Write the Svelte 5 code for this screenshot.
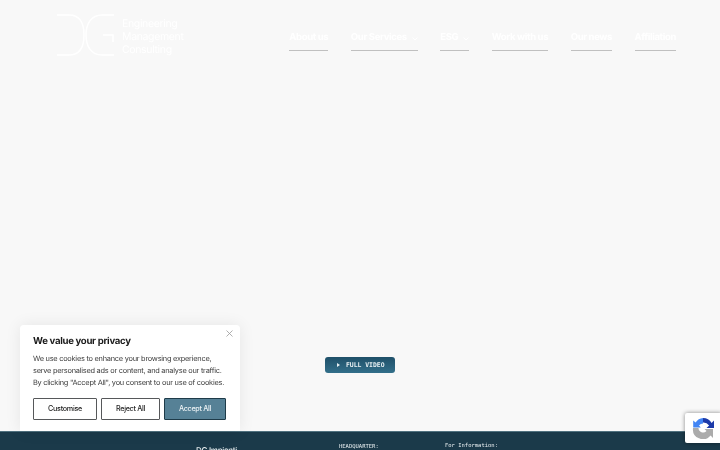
<script>
  const nav = [
    { label: "About us" },
    { label: "Our Services", caret: true },
    { label: "ESG", caret: true },
    { label: "Work with us" },
    { label: "Our news" },
    { label: "Affiliation" },
  ];
</script>

<div class="page">
  <header class="top">
    <a class="logo" href="#home" aria-label="DG Engineering Management Consulting">
      <svg width="58" height="42" viewBox="0 0 58 42" fill="none" stroke="#fff" stroke-width="1.5">
        <path d="M0 1h12c11 0 15 9 15 20s-4 20-15 20H0" />
        <path d="M57 1H45c-11 0-16 9-16 20s5 20 16 20h12" />
        <path d="M46 21h10v7" />
      </svg>
      <span class="logo-text">
        <span>Engineering</span>
        <span>Management</span>
        <span>Consulting</span>
      </span>
    </a>
    <nav class="menu">
      {#each nav as item}
        <a href="#nav">
          {item.label}
          {#if item.caret}
            <svg class="caret" width="6" height="4" viewBox="0 0 6 4" fill="none" stroke="#fff" stroke-width="1"><path d="M.5 .5 3 3 5.500 .5" /></svg>
          {/if}
        </a>
      {/each}
    </nav>
  </header>

  <main class="hero">
    <button class="video"><span class="play"></span>FULL VIDEO</button>
  </main>

  <footer class="foot">
    <div class="col-name">DG Impianti</div>
    <div class="col-hq">HEADQUARTER:</div>
    <div class="col-info">For Information:</div>
  </footer>

  <section class="cookie">
    <button class="close" aria-label="Close">
      <svg width="7" height="7" viewBox="0 0 7 7" stroke="#9a9a9a" stroke-width="0.8"><path d="M.5 .5l6 6M6.500 .5l-6 6" /></svg>
    </button>
    <h2>We value your privacy</h2>
    <p>We use cookies to enhance your browsing experience, serve personalised ads or content, and analyse our traffic. By clicking "Accept All", you consent to our use of cookies.</p>
    <div class="actions">
      <button class="custom">Customise</button>
      <button class="reject">Reject All</button>
      <button class="accept">Accept All</button>
    </div>
  </section>

  <div class="recaptcha" aria-label="reCAPTCHA">
    <svg width="22" height="22" viewBox="0 0 22 22" fill="none">
      <path d="M11 1a10 10 0 0 1 8.600 5L22 3.500V11h-7.500l2.600-2.600A7 7 0 0 0 11 5.500z" fill="#1c3aa9" />
      <path d="M11 1v5.500A5 5 0 0 0 7 8.600L8.800 10.500H1.200V3.500L3.600 5.400A10 10 0 0 1 11 1z" fill="#4285f4" />
      <path d="M1 11h5.500a4.600 4.600 0 0 0 8 3L12.500 12H21v9l-2.400-2.400A10 10 0 0 1 1 11z" fill="#ababab" />
    </svg>
  </div>
</div>

<style>
  :global(body) {
    margin: 0;
    background: #f8f8f8;
  }

  .page {
    position: relative;
    display: flex;
    flex-direction: column;
    height: 450px;
    overflow: hidden;
    font-family: Inter, "Liberation Sans", sans-serif;
    text-rendering: geometricPrecision;
    /* own layer: greyscale text instead of lcd fringes, soft like the reference */
    filter: blur(0.25px);
  }

  .top {
    display: flex;
    justify-content: space-between;
    align-items: flex-start;
    flex-shrink: 0;
    height: 47px;
    padding: 14px 44px 0 57px;
  }

  .logo {
    display: flex;
    gap: 7px;
    color: #fff;
    text-decoration: none;
  }

  .logo-text {
    display: flex;
    flex-direction: column;
    margin-top: 3px;
    font-size: 10.500px;
    letter-spacing: -0.35px;
    line-height: 13px;
    font-weight: 400;
  }

  .menu {
    display: flex;
    gap: 22.500px;
    margin-top: 15px;
  }

  .menu a {
    display: flex;
    align-items: flex-start;
    gap: 5px;
    height: 21px;
    color: #fff;
    font-size: 9.500px;
    letter-spacing: -0.35px;
    line-height: 18px;
    font-weight: 700;
    text-decoration: none;
    border-bottom: 1.5px solid #c0c0c0;
    white-space: nowrap;
  }

  .caret {
    margin-top: 8px;
  }

  .hero {
    flex: 1;
    display: flex;
    justify-content: center;
    align-items: flex-end;
    padding-bottom: 58px;
  }

  .video {
    display: flex;
    align-items: center;
    gap: 6px;
    width: 70px;
    height: 16px;
    padding: 0 0 0 12px;
    border: 0;
    border-radius: 3px;
    background: linear-gradient(#1f5069, #336f8a);
    color: #e8f0f3;
    font-family: "DejaVu Sans Mono", "Liberation Mono", monospace;
    font-size: 6.400px;
    font-weight: 700;
  }

  .play {
    width: 0;
    height: 0;
    border-left: 3px solid #e8f0f3;
    border-top: 2px solid transparent;
    border-bottom: 2px solid transparent;
  }

  .foot {
    display: flex;
    flex-shrink: 0;
    height: 19px;
    box-sizing: border-box;
    background: #1b3a4a;
    color: #e8eef0;
    border-top: 1px solid #50717f;
  }

  .col-name {
    width: 143px;
    margin: 13px 0 0 196px;
    font-size: 8px;
    letter-spacing: -0.3px;
    font-weight: 500;
  }

  .col-hq {
    width: 106px;
    margin-top: 12px;
    font-family: "DejaVu Sans Mono", "Liberation Mono", monospace;
    font-size: 5.500px;
  }

  .col-info {
    margin-top: 11px;
    font-family: "DejaVu Sans Mono", "Liberation Mono", monospace;
    font-size: 5.500px;
  }

  .cookie {
    position: absolute;
    left: 20px;
    top: 325px;
    width: 220px;
    height: 106px;
    box-sizing: border-box;
    padding: 10px 13px;
    background: #fff;
    border-radius: 4px 4px 0 0;
    box-shadow: 0 0 16px rgba(0, 0, 0, 0.08);
  }

  .close {
    position: absolute;
    top: 5px;
    right: 7px;
    display: flex;
    padding: 0;
    border: 0;
    background: none;
  }

  .cookie h2 {
    margin: 0 0 5px;
    font-size: 9.600px;
    letter-spacing: -0.3px;
    line-height: 13px;
    font-weight: 700;
    color: #1a1a1a;
  }

  .cookie p {
    margin: 0 0 9px;
    font-size: 7.400px;
    letter-spacing: -0.25px;
    line-height: 12px;
    color: #3c3c3c;
  }

  .actions {
    display: flex;
    gap: 4px;
  }

  .actions button {
    height: 21.500px;
    padding: 0;
    border: 1.5px solid #56585a;
    border-radius: 1px;
    background: #fff;
    color: #222;
    font-family: inherit;
    font-size: 7.200px;
    letter-spacing: -0.3px;
    font-weight: 500;
  }

  .actions .custom {
    width: 64px;
  }

  .actions .reject {
    width: 59px;
  }

  .actions .accept {
    width: 62px;
    background: #568196;
    border-color: #1e3b49;
    color: #eef4f6;
  }

  .recaptcha {
    position: absolute;
    right: -2px;
    top: 413px;
    display: flex;
    align-items: center;
    width: 37px;
    height: 30px;
    box-sizing: border-box;
    padding-left: 7px;
    background: #fff;
    border-radius: 2px;
    box-shadow: 0 0 4px rgba(0, 0, 0, 0.45);
  }
</style>
